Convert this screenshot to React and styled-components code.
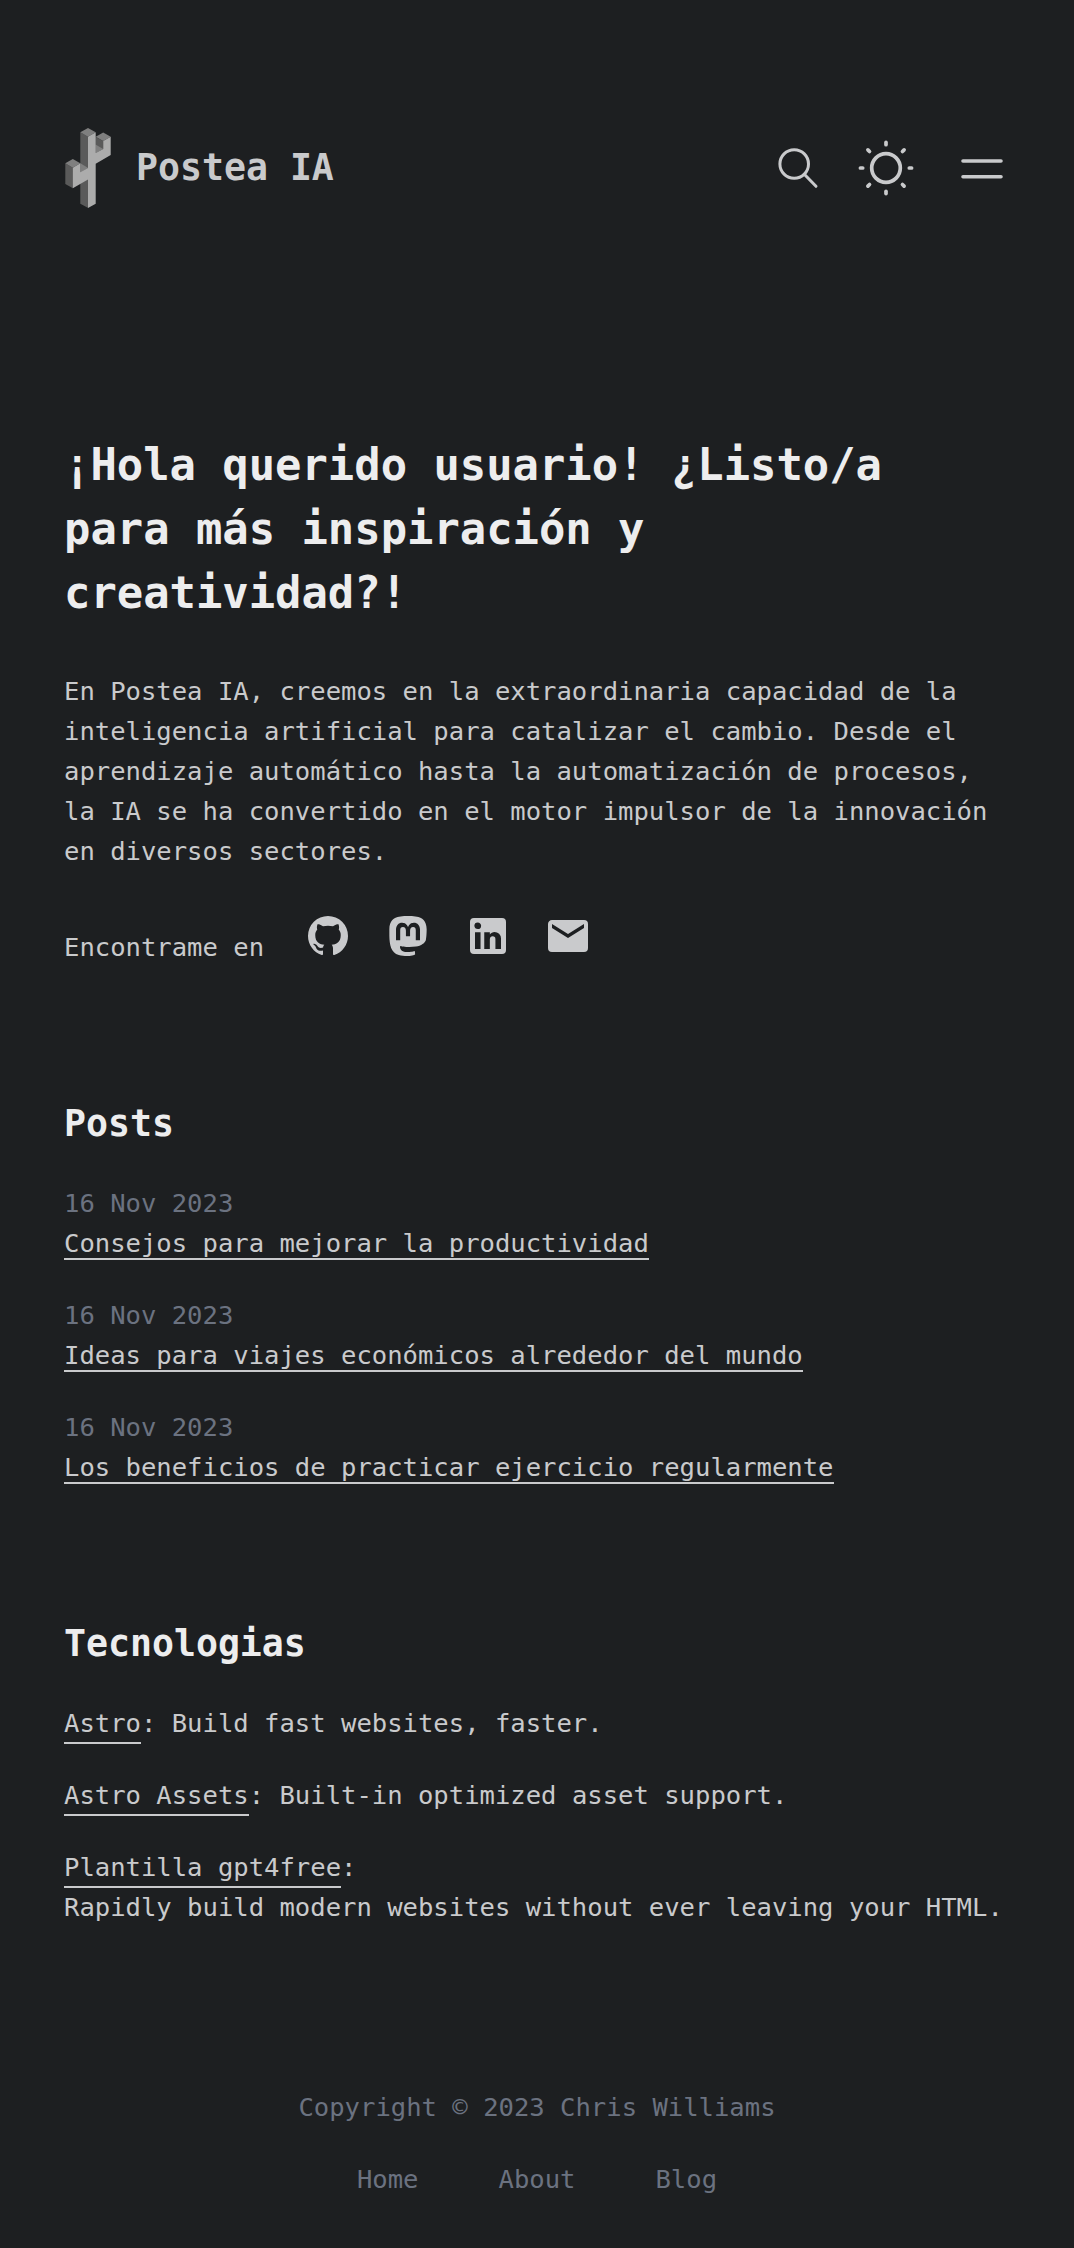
import React from "react";
import styled, { createGlobalStyle } from "styled-components";

const Global = createGlobalStyle`
  *, *::before, *::after { box-sizing: border-box; }
  body {
    margin: 0;
    background: #1d1f21;
    color: #c9cacc;
    font: 25.57px/40px "DejaVu Sans Mono", monospace;
  }
  h1, h2, p, ul { margin: 0; padding: 0; }
  ul { list-style: none; }
  a { color: inherit; text-decoration: none; }
`;

const Page = styled.div`
  height: 2248px;
  padding: 128px 64px 0;
`;
const Header = styled.header`
  display: flex;
  align-items: center;
  height: 80px;
`;
const Brand = styled.a`
  display: flex;
  align-items: center;
  font-size: 36.53px;
  font-weight: 700;
  white-space: nowrap;
`;
const BrandName = styled.span`
  margin-left: 24px;
`;
const Tools = styled.div`
  display: flex;
  align-items: center;
  margin-left: auto;
  margin-right: 7px;
`;
const ToolButton = styled.button`
  display: flex;
  padding: 0;
  border: 0;
  background: none;
  color: inherit;
  margin-left: ${(p) => p.$gap || 0}px;
`;
const Intro = styled.section`
  padding-top: 225px;
`;
const Title = styled.h1`
  width: 840px;
  color: #ededee;
  font-size: 43.83px;
  line-height: 64px;
`;
const Lead = styled.p`
  margin-top: 46px;
  white-space: nowrap;
`;
const Social = styled.div`
  display: flex;
  align-items: flex-end;
  height: 56px;
  margin-top: 41px;
`;
const SocialLabel = styled.span`
  margin-bottom: 1px;
`;
const SocialLinks = styled.div`
  display: flex;
  gap: 32px;
  align-self: flex-start;
  margin-left: 40px;
`;
const SocialLink = styled.a`
  display: flex;
`;
const Section = styled.section`
  padding-top: ${(p) => p.$top}px;
`;
const Heading = styled.h2`
  color: #ededee;
  font-size: 36.53px;
  line-height: 56px;
  margin-bottom: 31px;
`;
const List = styled.ul`
  display: grid;
  gap: 32px;
`;
const Post = styled.li`
  display: flex;
  flex-direction: column;
  align-items: flex-start;
`;
const PostDate = styled.time`
  color: #6b7280;
`;
const PostLink = styled.a`
  height: 40px;
  background: linear-gradient(#c9cacc, #c9cacc) 0 35px / 100% 2px no-repeat;
`;
const Tech = styled.li`
  white-space: nowrap;
`;
const TechLink = styled.a`
  display: inline-block;
  height: 39px;
  vertical-align: top;
  box-shadow: 0 2px 0 #c9cacc;
`;
const Footer = styled.footer`
  display: flex;
  flex-direction: column;
  align-items: center;
  gap: 32px;
  padding-top: 160px;
  color: #6b7280;
`;
const FooterNav = styled.nav`
  display: flex;
  gap: 80px;
`;

const CactusLogo = () => (
  <svg width="48" height="80" viewBox="0 0 48 80">
    <g fill="#5a5a5a">
      <path d="M16.300 4.300L24.200 8.700V80L16.300 75.700z" />
      <path d="M1.300 35.300L8.900 39.700V60.200L1.300 56z" />
      <path d="M31.500 8.700L39.200 13V21L31.500 25z" />
    </g>
    <g fill="#7f7f7f">
      <path d="M24 0l7.700 4.300L24 8.700l-7.700-4.400z" />
      <path d="M39.200 4.500l7.500 4.200L39.200 13l-7.500-4.300z" />
      <path d="M8.800 31.100l7.500 4.200L8.800 39.700l-7.500-4.400z" />
      <path d="M31.500 16.500L39.200 20.900L31.500 25.300z" />
      <path d="M16.300 35.300L24.200 40L16.300 44.500z" />
    </g>
    <g fill="#acacac">
      <path d="M24 8.700L31.700 4.300V25.100L39.200 20.900V13L46.700 8.700V27L31.700 35.700V75.700L24 80V51.500L8.800 60.200V39.700L16.300 35.300V44.300L24 40z" />
    </g>
  </svg>
);

const SearchIcon = () => (
  <svg width="42" height="42" viewBox="0 0 42 42" fill="none" stroke="currentColor" strokeWidth="3" strokeLinecap="round">
    <circle cx="17.200" cy="17" r="14.300" />
    <path d="M27.300 27.300L39 39.300" />
  </svg>
);

const SunIcon = () => (
  <svg width="56" height="56" viewBox="0 0 56 56" fill="none" stroke="currentColor" strokeWidth="3.700" strokeLinecap="round">
    <circle cx="28" cy="28" r="14.300" />
    {[0, 45, 90, 135, 180, 225, 270, 315].map((a) => (
      <path key={a} d="M28 2.400V4.700" transform={`rotate(${a} 28 28)`} />
    ))}
  </svg>
);

const MenuIcon = () => (
  <svg width="42" height="22" viewBox="0 0 42 22" fill="none" stroke="currentColor" strokeWidth="3.600" strokeLinecap="round">
    <path d="M2 4H40M2 19.800H40" />
  </svg>
);

const socials = {
  GitHub:
    "M12 2A10 10 0 0 0 2 12c0 4.42 2.87 8.17 6.84 9.5c.5.08.66-.23.66-.5v-1.69c-2.77.6-3.36-1.34-3.36-1.34c-.46-1.16-1.11-1.47-1.11-1.47c-.91-.62.07-.6.07-.6c1 .07 1.53 1.03 1.53 1.03c.87 1.52 2.34 1.07 2.91.83c.09-.65.35-1.09.63-1.34c-2.22-.25-4.55-1.11-4.55-4.92c0-1.11.38-2 1.03-2.71c-.1-.25-.45-1.29.1-2.64c0 0 .84-.27 2.75 1.02c.79-.22 1.65-.33 2.5-.33c.85 0 1.71.11 2.5.33c1.91-1.29 2.75-1.02 2.75-1.02c.55 1.35.2 2.39.1 2.64c.65.71 1.03 1.6 1.03 2.71c0 3.82-2.34 4.66-4.57 4.91c.36.31.69.92.69 1.85V21c0 .27.16.59.67.5C19.14 20.16 22 16.42 22 12A10 10 0 0 0 12 2Z",
  Mastodon:
    "M20.94 14c-.28 1.41-2.44 2.96-4.97 3.26c-1.31.15-2.6.3-3.97.24c-2.25-.11-4-.54-4-.54v.62c.32 2.22 2.22 2.35 4.03 2.42c1.82.05 3.44-.46 3.44-.46l.08 1.65s-1.28.68-3.55.81c-1.25.07-2.81-.03-4.62-.5c-3.92-1.05-4.6-5.24-4.7-9.5l-.01-3.43c0-4.34 2.83-5.61 2.83-5.61C6.95 2.3 9.41 2 11.97 2h.06c2.56 0 5.02.3 6.47.96c0 0 2.83 1.27 2.83 5.61c0 0 .04 3.21-.39 5.43M18 8.91c0-1.08-.3-1.91-.85-2.56c-.56-.63-1.3-.96-2.23-.96c-1.06 0-1.87.41-2.42 1.23l-.5.88l-.5-.88c-.56-.82-1.36-1.23-2.43-1.23c-.92 0-1.66.33-2.23.96C6.29 7 6 7.83 6 8.91v5.26h2.1V9.06c0-1.06.45-1.62 1.36-1.62c1 0 1.5.65 1.5 1.93v2.79h2.07V9.37c0-1.28.5-1.93 1.51-1.93c.9 0 1.35.56 1.35 1.62v5.11H18V8.91Z",
  LinkedIn:
    "M19 3a2 2 0 0 1 2 2v14a2 2 0 0 1-2 2H5a2 2 0 0 1-2-2V5a2 2 0 0 1 2-2h14m-.5 15.5v-5.3a3.26 3.26 0 0 0-3.26-3.26c-.85 0-1.84.52-2.32 1.3v-1.11h-2.79v8.37h2.79v-4.93c0-.77.62-1.4 1.39-1.4a1.4 1.4 0 0 1 1.4 1.4v4.93h2.79M6.88 8.56a1.68 1.68 0 0 0 1.68-1.68c0-.93-.75-1.69-1.68-1.69a1.69 1.69 0 0 0-1.69 1.69c0 .93.76 1.68 1.69 1.68m1.39 9.94v-8.37H5.5v8.37h2.77Z",
  Email:
    "M20 8l-8 5l-8-5V6l8 5l8-5m0-2H4c-1.11 0-2 .89-2 2v12a2 2 0 0 0 2 2h16a2 2 0 0 0 2-2V6a2 2 0 0 0-2-2Z",
};

const posts = [
  "Consejos para mejorar la productividad",
  "Ideas para viajes económicos alrededor del mundo",
  "Los beneficios de practicar ejercicio regularmente",
];

export default function App() {
  return (
    <Page>
      <Global />
      <Header>
        <Brand href="#"><CactusLogo /><BrandName>Postea IA</BrandName></Brand>
        <Tools>
          <ToolButton><SearchIcon /></ToolButton>
          <ToolButton $gap={39}><SunIcon /></ToolButton>
          <ToolButton $gap={47}><MenuIcon /></ToolButton>
        </Tools>
      </Header>
      <Intro>
        <Title>¡Hola querido usuario! ¿Listo/a para más inspiración y creatividad?!</Title>
        <Lead>
          En Postea IA, creemos en la extraordinaria capacidad de la<br />
          inteligencia artificial para catalizar el cambio. Desde el<br />
          aprendizaje automático hasta la automatización de procesos,<br />
          la IA se ha convertido en el motor impulsor de la innovación<br />
          en diversos sectores.
        </Lead>
        <Social>
          <SocialLabel>Encontrame en</SocialLabel>
          <SocialLinks>
            {Object.entries(socials).map(([name, d]) => (
              <SocialLink key={name} href="#">
                <svg width="48" height="48" viewBox="0 0 24 24" fill="currentColor"><path d={d} /></svg>
              </SocialLink>
            ))}
          </SocialLinks>
        </Social>
      </Intro>
      <Section $top={128}>
        <Heading>Posts</Heading>
        <List>
          {posts.map((t) => (
            <Post key={t}><PostDate>16 Nov 2023</PostDate><PostLink href="#">{t}</PostLink></Post>
          ))}
        </List>
      </Section>
      <Section $top={129}>
        <Heading>Tecnologias</Heading>
        <List>
          <Tech><TechLink href="#">Astro</TechLink>: Build fast websites, faster.</Tech>
          <Tech><TechLink href="#">Astro Assets</TechLink>: Built-in optimized asset support.</Tech>
          <Tech><TechLink href="#">Plantilla gpt4free</TechLink>:<br />Rapidly build modern websites without ever leaving your HTML.</Tech>
        </List>
      </Section>
      <Footer>
        <span>Copyright © 2023 Chris Williams</span>
        <FooterNav><a href="#">Home</a><a href="#">About</a><a href="#">Blog</a></FooterNav>
      </Footer>
    </Page>
  );
}
